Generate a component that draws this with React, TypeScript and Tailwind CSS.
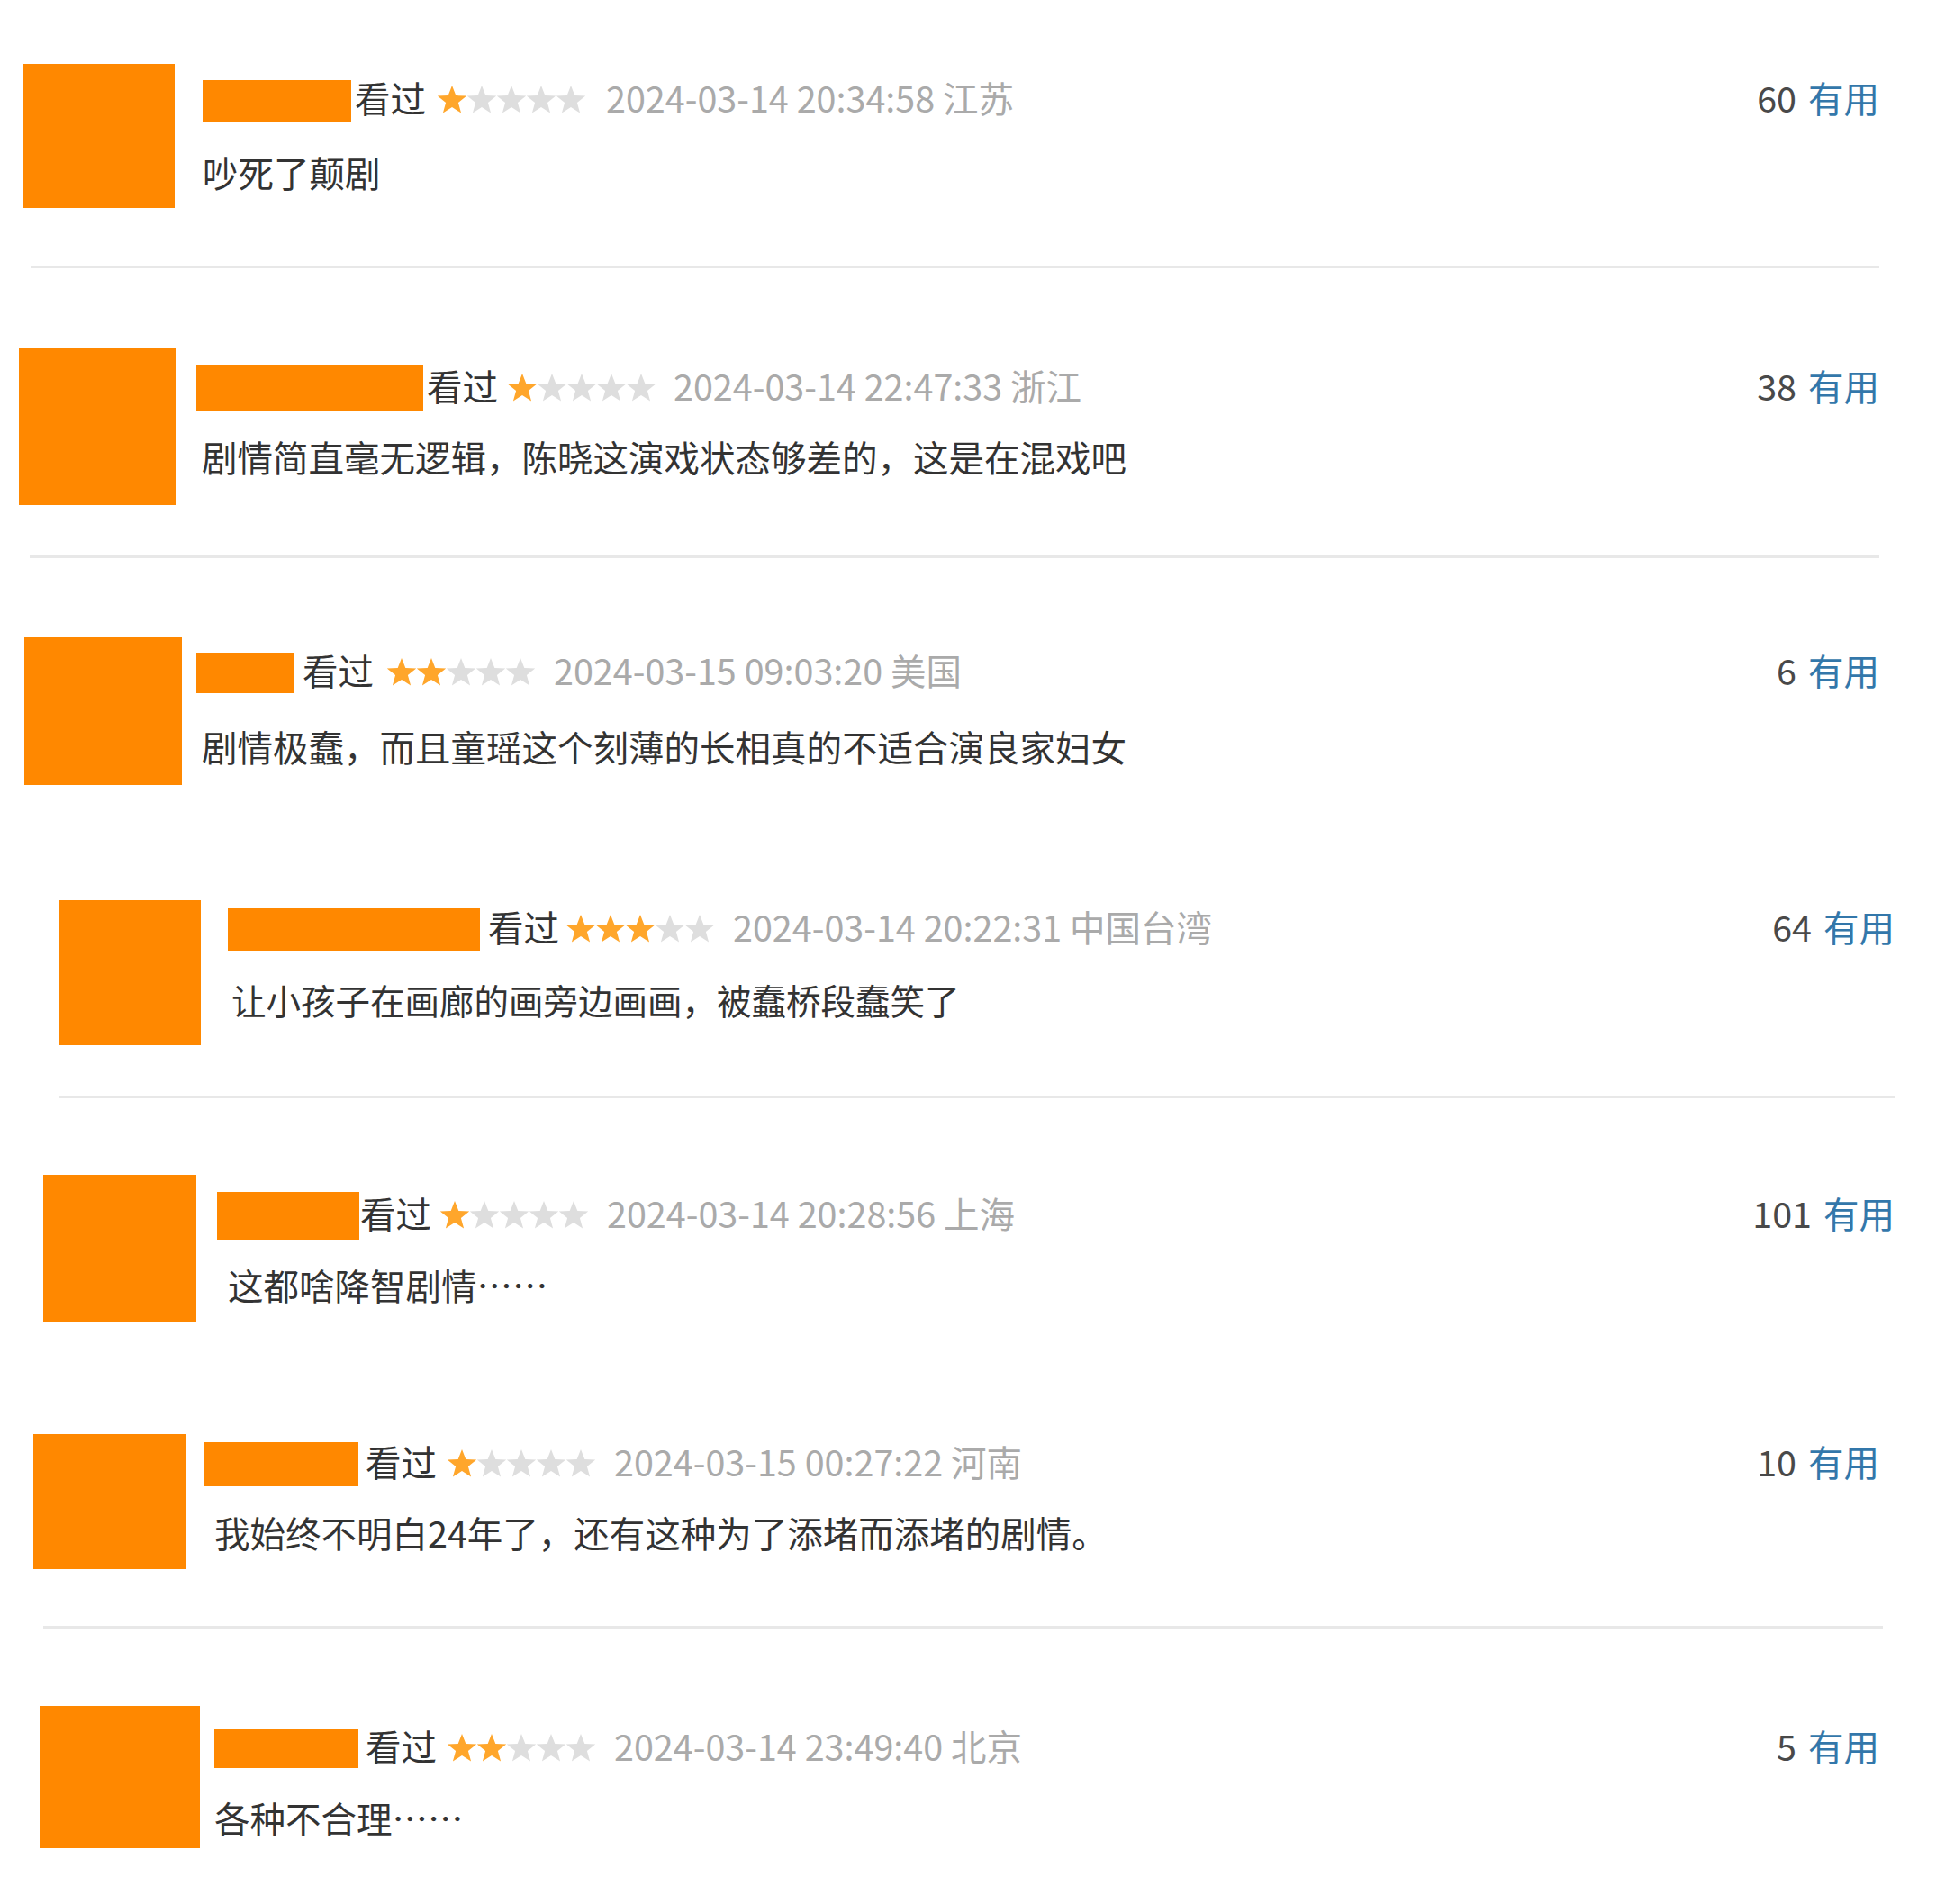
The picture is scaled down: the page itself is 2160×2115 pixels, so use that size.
import React from 'react';

// one short review line per entry; offsets are per row because the rows come from different crops
interface Review {
  row: string;
  avatar: string;
  body: string;
  bar: string;
  seen: string;
  stars: string;
  date: string;
  comment: string;
  votesBox: string;
  rating: number;
  time: string;
  place: string;
  text: string;
  votes: number;
  sep?: string;
}

const reviews: Review[] = [
  {
    row: 'h-[295px]', avatar: 'ml-[25px] mt-[71px] w-[169px] h-[160px]', body: 'ml-[31px] mt-[88px]',
    bar: 'w-[165px] h-[46px]', seen: 'ml-[4px]', stars: 'ml-[12px]', date: 'ml-[22px]', comment: 'ml-[0px] mt-[30px]',
    votesBox: 'mr-[73px]', rating: 1, time: '2024-03-14 20:34:58', place: '江苏', text: '吵死了颠剧', votes: 60,
    sep: 'ml-[34px] mr-[73px]',
  },
  {
    row: 'h-[319px]', avatar: 'ml-[21px] mt-[89px] w-[174px] h-[174px]', body: 'ml-[23px] mt-[108px]',
    bar: 'w-[252px] h-[51px]', seen: 'ml-[4px]', stars: 'ml-[10px]', date: 'ml-[19px]', comment: 'ml-[6px] mt-[25px]',
    votesBox: 'mr-[73px]', rating: 1, time: '2024-03-14 22:47:33', place: '浙江',
    text: '剧情简直毫无逻辑，陈晓这演戏状态够差的，这是在混戏吧', votes: 38,
    sep: 'ml-[33px] mr-[73px]',
  },
  {
    row: 'h-[360px]', avatar: 'ml-[27px] mt-[88px] w-[175px] h-[164px]', body: 'ml-[16px] mt-[104px]',
    bar: 'w-[108px] h-[45px]', seen: 'ml-[10px]', stars: 'ml-[14px]', date: 'ml-[20px]', comment: 'ml-[6px] mt-[32px]',
    votesBox: 'mr-[73px]', rating: 2, time: '2024-03-15 09:03:20', place: '美国',
    text: '剧情极蠢，而且童瑶这个刻薄的长相真的不适合演良家妇女', votes: 6,
  },
  {
    row: 'h-[237px]', avatar: 'ml-[65px] mt-[20px] w-[158px] h-[161px]', body: 'ml-[30px] mt-[29px]',
    bar: 'w-[280px] h-[47px]', seen: 'ml-[9px]', stars: 'ml-[7px]', date: 'ml-[20px]', comment: 'ml-[4px] mt-[28px] text-[38.5px]',
    votesBox: 'mr-[56px]', rating: 3, time: '2024-03-14 20:22:31', place: '中国台湾',
    text: '让小孩子在画廊的画旁边画画，被蠢桥段蠢笑了', votes: 64,
    sep: 'ml-[65px] mr-[56px]',
  },
  {
    row: 'h-[350px]', avatar: 'ml-[48px] mt-[85px] w-[170px] h-[163px]', body: 'ml-[23px] mt-[104px]',
    bar: 'w-[158px] h-[53px]', seen: 'ml-[1px]', stars: 'ml-[9px]', date: 'ml-[20px]', comment: 'ml-[12px] mt-[25px]',
    votesBox: 'mr-[56px]', rating: 1, time: '2024-03-14 20:28:56', place: '上海', text: '这都啥降智剧情……', votes: 101,
  },
  {
    row: 'h-[236px]', avatar: 'ml-[37px] mt-[23px] w-[170px] h-[150px]', body: 'ml-[20px] mt-[32px]',
    bar: 'w-[171px] h-[49px]', seen: 'ml-[8px]', stars: 'ml-[11px]', date: 'ml-[20px]', comment: 'ml-[11px] mt-[26px]',
    votesBox: 'mr-[73px]', rating: 1, time: '2024-03-15 00:27:22', place: '河南',
    text: '我始终不明白24年了，还有这种为了添堵而添堵的剧情。', votes: 10,
    sep: 'ml-[48px] mr-[69px]',
  },
  {
    row: 'h-[306px]', avatar: 'ml-[44px] mt-[86px] w-[178px] h-[158px]', body: 'ml-[16px] mt-[110px]',
    bar: 'w-[160px] h-[43px]', seen: 'ml-[8px]', stars: 'ml-[11px]', date: 'ml-[20px]', comment: 'ml-[0px] mt-[27px]',
    votesBox: 'mr-[73px]', rating: 2, time: '2024-03-14 23:49:40', place: '北京', text: '各种不合理……', votes: 5,
  },
];

// fat five-point star, 34 wide, drawn 33 apart so neighbours just touch
const STAR = '17,0 21.3,11.1 33.2,11.6 23.9,19 27.1,30.5 17,24 6.9,30.5 10.1,19 0.8,11.6 12.7,11.1';

const Stars: React.FC<{ rating: number; className?: string }> = ({ rating, className }) => (
  <svg width="166" height="31" viewBox="0 0 166 31" className={className}>
    {[0, 1, 2, 3, 4].map((i) => (
      <polygon key={i} points={STAR} transform={`translate(${i * 33} 0)`} fill={i < rating ? '#ffa62b' : '#dedede'} />
    ))}
  </svg>
);

const App: React.FC = () => {
  return (
    <div className="w-[2160px] h-[2115px] bg-white overflow-hidden font-['Noto_Sans_CJK_SC','Noto_Sans',sans-serif] text-[39.5px] leading-none">
      {reviews.map((r, idx) => (
        <React.Fragment key={idx}>
          <div className={`flex ${r.row}`}>
            <div className={`shrink-0 bg-[#ff8800] ${r.avatar}`} />
            <div className={`flex-1 flex flex-col ${r.body}`}>
              {/* header line */}
              <div className="flex items-center">
                <div className={`shrink-0 bg-[#ff8800] ${r.bar}`} />
                <span className={`mb-[8px] text-[#333333] ${r.seen}`}>看过</span>
                <Stars rating={r.rating} className={`shrink-0 mb-[2px] ${r.stars}`} />
                <span className={`mb-[8px] text-[#aaaaaa] whitespace-nowrap ${r.date}`}>
                  {r.time} {r.place}
                </span>
                <div className={`ml-auto mb-[8px] flex items-center whitespace-nowrap ${r.votesBox}`}>
                  <span className="text-[#494949]">{r.votes}</span>
                  <span className="ml-[13px] text-[#3377aa]">有用</span>
                </div>
              </div>
              <p className={`text-[#333333] leading-[50px] whitespace-nowrap ${r.comment}`}>{r.text}</p>
            </div>
          </div>
          {r.sep && <div className={`h-[3px] bg-[#e8e8e8] ${r.sep}`} />}
        </React.Fragment>
      ))}
    </div>
  );
};

export default App;
